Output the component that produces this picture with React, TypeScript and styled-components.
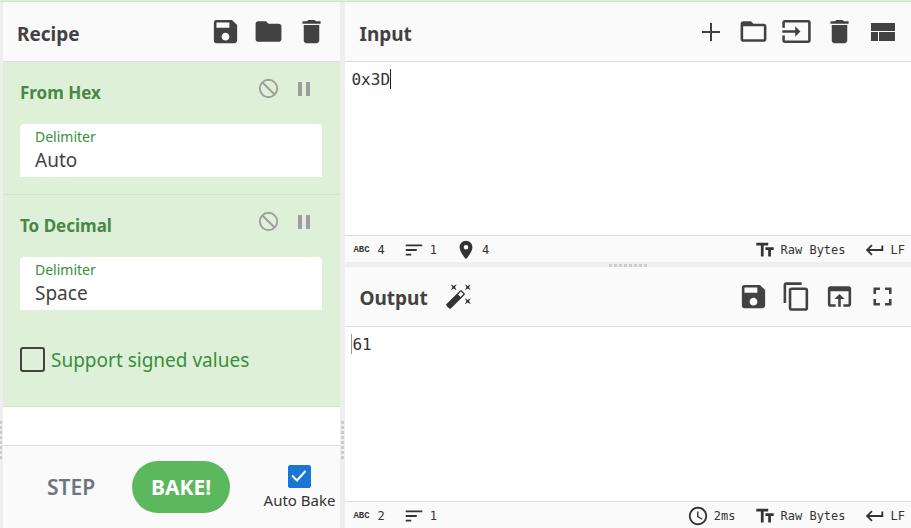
import React, { useState } from "react";
import styled, { createGlobalStyle } from "styled-components";
import {
  MdSave,
  MdFolder,
  MdDelete,
  MdInput,
  MdContentCopy,
  MdOpenInBrowser,
  MdFullscreen,
  MdSort,
  MdPlace,
  MdTextFields,
  MdKeyboardReturn,
  MdAccessTime,
  MdPause,
} from "react-icons/md";

const sans = '"Noto Sans", "Open Sans", sans-serif';
const mono = '"DejaVu Sans Mono", monospace';

const GlobalStyle = createGlobalStyle`
  *, *::before, *::after { box-sizing: border-box; }
  body { margin: 0; background: #fff; color: #424242; font-family: ${sans}; overflow: hidden; }
  button, select, input, textarea { font: inherit; color: inherit; margin: 0; }
`;

const Page = styled.div`
  display: flex;
  flex-direction: column;
  height: 100vh;
`;

const Banner = styled.div`
  flex: none;
  height: 2px;
  background: #dff0d8;
  border-bottom: 1px solid #d6e0d2;
`;

const Workspace = styled.main`
  flex: 1;
  min-height: 0;
  display: flex;
`;

const VerticalGutter = styled.div<{ $wide?: boolean }>`
  flex: none;
  width: ${(p) => (p.$wide ? 5 : 3)}px;
  padding: 419px 1px 0 ${(p) => (p.$wide ? 1 : 0)}px;
  background: #eee;
  cursor: col-resize;

  &::after {
    content: "";
    display: block;
    height: 38px;
    background: repeating-linear-gradient(to bottom, #ccc 0 3px, transparent 3px 5px);
  }
`;

const HorizontalGutter = styled.div`
  flex: none;
  height: 5px;
  padding-top: 2px;
  background: #eee;
  cursor: row-resize;

  &::after {
    content: "";
    display: block;
    width: 38px;
    height: 3px;
    margin: 0 auto;
    background: repeating-linear-gradient(to right, #ccc 0 3px, transparent 3px 5px);
  }
`;

const RecipePanel = styled.section`
  flex: 37 1 0;
  min-width: 0;
  display: flex;
  flex-direction: column;
`;

const IOColumn = styled.div`
  flex: 62 1 0;
  min-width: 0;
  display: flex;
  flex-direction: column;
`;

const IOPane = styled.section<{ $share: number }>`
  flex: ${(p) => p.$share} 1 0;
  min-height: 0;
  display: flex;
  flex-direction: column;
`;

const Header = styled.header`
  flex: none;
  display: flex;
  align-items: center;
  height: 60px;
  padding: 0 13px 0 14px;
  background: #fafafa;
  border-bottom: 1px solid #ddd;
`;

const Title = styled.h2`
  margin: 0;
  padding-top: 4px;
  font-size: 19px;
  line-height: 24px;
  font-weight: 700;
`;

const Tools = styled.div`
  display: flex;
  gap: 12px;
  margin-left: auto;
`;

const IconButton = styled.button`
  display: flex;
  padding: 0;
  border: 0;
  background: none;
  cursor: pointer;

  svg { width: 31px; height: 31px; }
`;

const MagicButton = styled(IconButton)`
  margin-left: 17px;
  color: #333;

  svg { width: 28px; height: 28px; }
`;

const Operations = styled.ul`
  flex: 1;
  min-height: 0;
  margin: 0;
  padding: 0;
  list-style: none;
`;

const Operation = styled.li`
  padding: 15px 18px 17px 17px;
  background: #dff0d8;
  border-bottom: 1px solid #d0e9c0;
`;

const OperationHead = styled.div`
  display: flex;
  align-items: flex-start;
  height: 47px;
`;

const OperationName = styled.h3`
  margin: 0;
  padding-top: 3px;
  font-size: 17px;
  line-height: 26px;
  font-weight: 700;
  color: #468847;
`;

const OperationTools = styled.div`
  display: flex;
  gap: 11px;
  margin-left: auto;
  padding-right: 6px;
`;

const SmallIconButton = styled(IconButton)`
  color: #9e9e9e;

  svg { width: 24px; height: 24px; }
`;

const Field = styled.label`
  display: block;
  height: 53px;
  padding: 3px 15px 0;
  background: #fff;
  border-radius: 4px 4px 0 0;
`;

const FieldName = styled.span`
  display: block;
  font-size: 14px;
  line-height: 20px;
  color: #388e3c;
`;

const FieldSelect = styled.select`
  display: block;
  width: 100%;
  padding: 0;
  border: 0;
  outline: 0;
  appearance: none;
  background: none;
  font-size: 19px;
  line-height: 26px;
`;

const CheckRow = styled.label`
  display: flex;
  align-items: center;
  gap: 6px;
  padding: 35px 0 16px;
  font-size: 19px;
  line-height: 26px;
  color: #388e3c;
`;

const CheckText = styled.span`
  padding-top: 2px;
`;

const OutlineCheckbox = styled.input`
  width: 25px;
  height: 25px;
  appearance: none;
  border: 2px solid #424242;
  border-radius: 3px;

  &:checked { background: #424242; }
`;

const Controls = styled.footer`
  flex: none;
  display: flex;
  align-items: center;
  height: 83px;
  padding: 0 5px 0 29px;
  background: #fafafa;
  border-top: 1px solid #ddd;
`;

const StepButton = styled.button`
  width: 78px;
  height: 52px;
  padding: 0;
  border: 0;
  background: none;
  font-size: 21px;
  font-weight: 600;
  color: #6c757d;
`;

const BakeButton = styled.button`
  width: 98px;
  height: 52px;
  margin-left: 22px;
  padding: 0;
  border: 0;
  border-radius: 26px;
  background: #5cb85c;
  font-size: 21px;
  font-weight: 700;
  color: #fff;
`;

const AutoBake = styled.label`
  display: flex;
  flex-direction: column;
  align-items: center;
  gap: 1px;
  margin-left: auto;
  padding-top: 1px;
  font-size: 15px;
  line-height: 22px;
  white-space: nowrap;
  color: #333;
`;

const CheckSlot = styled.span`
  display: grid;
  width: 23px;
  height: 23px;

  > * { grid-area: 1 / 1; }
  svg { pointer-events: none; }
`;

const FilledCheckbox = styled.input`
  width: 23px;
  height: 23px;
  appearance: none;
  border: 1px solid #1976d2;
  border-radius: 2px;

  &:checked { background: #1976d2; }
`;

const Editor = styled.div`
  flex: 1;
  min-height: 0;
  display: flex;
  align-items: flex-start;
  padding: 7px 6px;
  background: #fff;
`;

const EditorText = styled.textarea`
  display: block;
  padding: 1px 0 0;
  border: 0;
  outline: 0;
  resize: none;
  overflow: hidden;
  field-sizing: content;
  background: none;
  font-family: ${mono};
  font-size: 16px;
  line-height: 20px;
  color: #333;
`;

const Caret = styled.span<{ $faded?: boolean }>`
  width: 1px;
  height: 20px;
  background: ${(p) => (p.$faded ? "#999" : "#222")};
`;

const StatusBar = styled.div`
  flex: none;
  display: flex;
  align-items: center;
  justify-content: space-between;
  height: 27px;
  padding: 2px 6px 0 5px;
  background: #fafafa;
  border-top: 1px solid #ddd;
  font-family: ${mono};
  font-size: 12px;
  line-height: 16px;
  color: #333;
`;

const StatusGroup = styled.div`
  display: flex;
  gap: 18px;
`;

const StatusItem = styled.span`
  display: flex;
  align-items: center;
  gap: 5px;
  white-space: nowrap;

  svg { width: 22px; height: 22px; }
`;

const AbcMark = styled.span`
  width: 22px;
  text-align: center;
  font-family: "Liberation Mono", monospace;
  font-size: 9px;
  font-weight: 700;
`;

const PlusIcon = () => (
  <svg viewBox="0 0 31 31" fill="none" stroke="currentColor" strokeWidth="2">
    <path d="M16 7v18M7 16h18" />
  </svg>
);

const FolderOutlineIcon = () => (
  <svg viewBox="0 0 24 24" fill="currentColor">
    <path d="M20 6h-8l-2-2H4c-1.1 0-2 .9-2 2v12c0 1.100.9 2 2 2h16c1.100 0 2-.9 2-2V8c0-1.100-.9-2-2-2zm0 12H4V8h16v10z" />
  </svg>
);

const LayoutIcon = () => (
  <svg viewBox="0 0 31 31" fill="currentColor">
    <path d="M4 7h24v8H4zM4 16h7v9H4zM12 16h16v9H12z" />
  </svg>
);

const DisableIcon = () => (
  <svg viewBox="0 0 24 24" fill="none" stroke="currentColor" strokeWidth="1.9">
    <circle cx="11.5" cy="11.5" r="8.7" />
    <path d="M5.500 5.500l12 12" />
  </svg>
);

const WandIcon = () => (
  <svg viewBox="0 0 24 24" fill="currentColor">
    <path d="M7.5 5.6L5 7l1.400-2.500L5 2l2.500 1.400L10 2 8.600 4.500 10 7 7.500 5.600M19.500 15.400L22 14l-1.400 2.500L22 19l-2.500-1.400L17 19l1.400-2.500L17 14l2.500 1.400M22 2l-1.400 2.500L22 7l-2.500-1.400L17 7l1.400-2.500L17 2l2.500 1.400L22 2M13.340 12.780l2.440-2.440-2.120-2.120-2.440 2.440 2.120 2.120M14.370 7.290l2.340 2.340c.39.37.39 1.020 0 1.410L5.040 22.710c-.39.39-1.040.39-1.410 0l-2.340-2.340c-.39-.37-.39-1.020 0-1.410L12.960 7.290c.39-.39 1.040-.39 1.410 0z" />
  </svg>
);

const CheckIcon = () => (
  <svg viewBox="0 0 23 23" fill="none" stroke="#fff" strokeWidth="2">
    <path d="M4 10.500l5 5 8.500-9.500" />
  </svg>
);

function OperationTitle({ name }: { name: string }) {
  return (
    <OperationHead>
      <OperationName>{name}</OperationName>
      <OperationTools>
        <SmallIconButton aria-label={`Disable ${name}`}><DisableIcon /></SmallIconButton>
        <SmallIconButton aria-label={`Breakpoint on ${name}`}><MdPause /></SmallIconButton>
      </OperationTools>
    </OperationHead>
  );
}

function Delimiter({ initial }: { initial: string }) {
  return (
    <Field>
      <FieldName>Delimiter</FieldName>
      <FieldSelect defaultValue={initial}>
        <option>{initial}</option>
      </FieldSelect>
    </Field>
  );
}

function Encoding() {
  return (
    <>
      <StatusItem><MdTextFields />Raw Bytes</StatusItem>
      <StatusItem><MdKeyboardReturn />LF</StatusItem>
    </>
  );
}

export default function App() {
  const [input, setInput] = useState("0x3D");
  const [autoBake, setAutoBake] = useState(true);

  return (
    <Page>
      <GlobalStyle />
      <Banner />
      <Workspace>
        <VerticalGutter />
        <RecipePanel>
          <Header>
            <Title>Recipe</Title>
            <Tools>
              <IconButton aria-label="Save recipe"><MdSave /></IconButton>
              <IconButton aria-label="Load recipe"><MdFolder /></IconButton>
              <IconButton aria-label="Clear recipe"><MdDelete /></IconButton>
            </Tools>
          </Header>
          <Operations>
            <Operation>
              <OperationTitle name="From Hex" />
              <Delimiter initial="Auto" />
            </Operation>
            <Operation>
              <OperationTitle name="To Decimal" />
              <Delimiter initial="Space" />
              <CheckRow>
                <OutlineCheckbox type="checkbox" />
                <CheckText>Support signed values</CheckText>
              </CheckRow>
            </Operation>
          </Operations>
          <Controls>
            <StepButton>STEP</StepButton>
            <BakeButton>BAKE!</BakeButton>
            <AutoBake>
              <CheckSlot>
                <FilledCheckbox
                  type="checkbox"
                  checked={autoBake}
                  onChange={(e) => setAutoBake(e.target.checked)}
                />
                {autoBake && <CheckIcon />}
              </CheckSlot>
              Auto Bake
            </AutoBake>
          </Controls>
        </RecipePanel>
        <VerticalGutter $wide />
        <IOColumn>
          <IOPane $share={499}>
            <Header>
              <Title>Input</Title>
              <Tools>
                <IconButton aria-label="Add input tab"><PlusIcon /></IconButton>
                <IconButton aria-label="Open folder"><FolderOutlineIcon /></IconButton>
                <IconButton aria-label="Open file"><MdInput /></IconButton>
                <IconButton aria-label="Clear input"><MdDelete /></IconButton>
                <IconButton aria-label="Reset layout"><LayoutIcon /></IconButton>
              </Tools>
            </Header>
            <Editor>
              <EditorText
                aria-label="Input"
                rows={1}
                spellCheck={false}
                value={input}
                onChange={(e) => setInput(e.target.value)}
              />
              <Caret />
            </Editor>
            <StatusBar>
              <StatusGroup>
                <StatusItem><AbcMark>ABC</AbcMark>4</StatusItem>
                <StatusItem><MdSort />1</StatusItem>
                <StatusItem><MdPlace />4</StatusItem>
              </StatusGroup>
              <StatusGroup>
                <Encoding />
              </StatusGroup>
            </StatusBar>
          </IOPane>
          <HorizontalGutter />
          <IOPane $share={501}>
            <Header>
              <Title>Output</Title>
              <MagicButton aria-label="Magic"><WandIcon /></MagicButton>
              <Tools>
                <IconButton aria-label="Save output"><MdSave /></IconButton>
                <IconButton aria-label="Copy output"><MdContentCopy /></IconButton>
                <IconButton aria-label="Move output to input"><MdOpenInBrowser /></IconButton>
                <IconButton aria-label="Maximise output"><MdFullscreen /></IconButton>
              </Tools>
            </Header>
            <Editor>
              <Caret $faded />
              <EditorText aria-label="Output" rows={1} readOnly value="61" />
            </Editor>
            <StatusBar>
              <StatusGroup>
                <StatusItem><AbcMark>ABC</AbcMark>2</StatusItem>
                <StatusItem><MdSort />1</StatusItem>
              </StatusGroup>
              <StatusGroup>
                <StatusItem><MdAccessTime />2ms</StatusItem>
                <Encoding />
              </StatusGroup>
            </StatusBar>
          </IOPane>
        </IOColumn>
      </Workspace>
    </Page>
  );
}
